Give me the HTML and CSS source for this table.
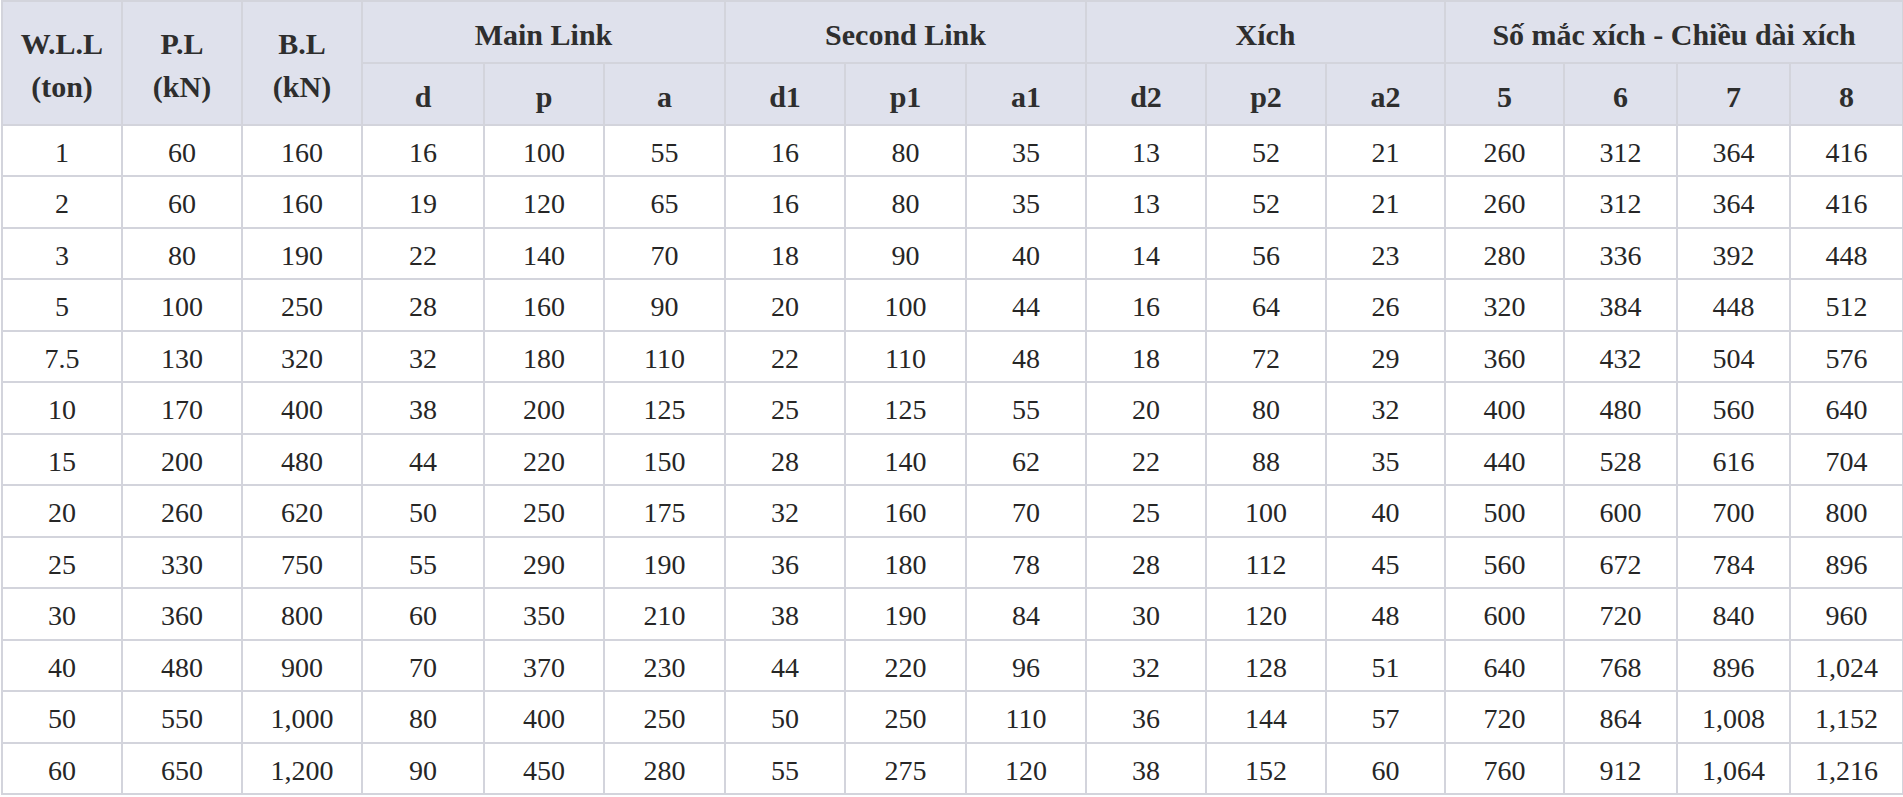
FILE: index.html
```html
<!DOCTYPE html>
<html lang="vi">
<head>
<meta charset="utf-8">
<title>Bảng thông số</title>
<link rel="stylesheet" href="styles.css">
</head>
<body>
<table class="spec">
  <colgroup>
    <col class="c120"><col class="c120"><col class="c120">
    <col class="c122"><col class="c120"><col class="c121">
    <col class="c120"><col class="c121"><col class="c120">
    <col class="c120"><col class="c120"><col class="c119">
    <col class="c119"><col class="c113"><col class="c113"><col class="c113">
  </colgroup>
  <thead>
    <tr class="h1">
      <th rowspan="2">W.L.L<br>(ton)</th>
      <th rowspan="2">P.L<br>(kN)</th>
      <th rowspan="2">B.L<br>(kN)</th>
      <th colspan="3">Main Link</th>
      <th colspan="3">Second Link</th>
      <th colspan="3">Xích</th>
      <th colspan="4">Số mắc xích - Chiều dài xích</th>
    </tr>
    <tr class="h2">
      <th>d</th><th>p</th><th>a</th>
      <th>d1</th><th>p1</th><th>a1</th>
      <th>d2</th><th>p2</th><th>a2</th>
      <th>5</th><th>6</th><th>7</th><th>8</th>
    </tr>
  </thead>
  <tbody>
    <tr><td>1</td><td>60</td><td>160</td><td>16</td><td>100</td><td>55</td><td>16</td><td>80</td><td>35</td><td>13</td><td>52</td><td>21</td><td>260</td><td>312</td><td>364</td><td>416</td></tr>
    <tr class="odd"><td>2</td><td>60</td><td>160</td><td>19</td><td>120</td><td>65</td><td>16</td><td>80</td><td>35</td><td>13</td><td>52</td><td>21</td><td>260</td><td>312</td><td>364</td><td>416</td></tr>
    <tr><td>3</td><td>80</td><td>190</td><td>22</td><td>140</td><td>70</td><td>18</td><td>90</td><td>40</td><td>14</td><td>56</td><td>23</td><td>280</td><td>336</td><td>392</td><td>448</td></tr>
    <tr class="odd"><td>5</td><td>100</td><td>250</td><td>28</td><td>160</td><td>90</td><td>20</td><td>100</td><td>44</td><td>16</td><td>64</td><td>26</td><td>320</td><td>384</td><td>448</td><td>512</td></tr>
    <tr><td>7.5</td><td>130</td><td>320</td><td>32</td><td>180</td><td>110</td><td>22</td><td>110</td><td>48</td><td>18</td><td>72</td><td>29</td><td>360</td><td>432</td><td>504</td><td>576</td></tr>
    <tr class="odd"><td>10</td><td>170</td><td>400</td><td>38</td><td>200</td><td>125</td><td>25</td><td>125</td><td>55</td><td>20</td><td>80</td><td>32</td><td>400</td><td>480</td><td>560</td><td>640</td></tr>
    <tr><td>15</td><td>200</td><td>480</td><td>44</td><td>220</td><td>150</td><td>28</td><td>140</td><td>62</td><td>22</td><td>88</td><td>35</td><td>440</td><td>528</td><td>616</td><td>704</td></tr>
    <tr class="odd"><td>20</td><td>260</td><td>620</td><td>50</td><td>250</td><td>175</td><td>32</td><td>160</td><td>70</td><td>25</td><td>100</td><td>40</td><td>500</td><td>600</td><td>700</td><td>800</td></tr>
    <tr><td>25</td><td>330</td><td>750</td><td>55</td><td>290</td><td>190</td><td>36</td><td>180</td><td>78</td><td>28</td><td>112</td><td>45</td><td>560</td><td>672</td><td>784</td><td>896</td></tr>
    <tr class="odd"><td>30</td><td>360</td><td>800</td><td>60</td><td>350</td><td>210</td><td>38</td><td>190</td><td>84</td><td>30</td><td>120</td><td>48</td><td>600</td><td>720</td><td>840</td><td>960</td></tr>
    <tr><td>40</td><td>480</td><td>900</td><td>70</td><td>370</td><td>230</td><td>44</td><td>220</td><td>96</td><td>32</td><td>128</td><td>51</td><td>640</td><td>768</td><td>896</td><td>1,024</td></tr>
    <tr class="odd"><td>50</td><td>550</td><td>1,000</td><td>80</td><td>400</td><td>250</td><td>50</td><td>250</td><td>110</td><td>36</td><td>144</td><td>57</td><td>720</td><td>864</td><td>1,008</td><td>1,152</td></tr>
    <tr><td>60</td><td>650</td><td>1,200</td><td>90</td><td>450</td><td>280</td><td>55</td><td>275</td><td>120</td><td>38</td><td>152</td><td>60</td><td>760</td><td>912</td><td>1,064</td><td>1,216</td></tr>
  </tbody>
</table>
</body>
</html>
```
FILE: styles.css
```css
html, body {
  margin: 0;
  padding: 0;
  background: #ffffff;
}
body {
  font-family: "Liberation Serif", "Times New Roman", serif;
  color: #262626;
}
.spec {
  border-collapse: collapse;
  table-layout: fixed;
  width: 1903px;
  margin: 0 0 0 1px;
}
.c113 { width: 113px; }
.c119 { width: 119px; }
.c120 { width: 120px; }
.c121 { width: 121px; }
.c122 { width: 122px; }
.spec th,
.spec td {
  border: 2px solid #d3d4dc;
  text-align: center;
  vertical-align: middle;
  padding: 0;
}
.spec th {
  background: #dfe1ec;
  font-weight: bold;
  font-size: 30px;
  line-height: 43px;
  color: #2e2e2e;
}
.spec .h1 th {
  height: 56px;
  padding-top: 4px;
}
.spec .h2 th {
  height: 56px;
  padding-top: 4px;
}
.spec .h1 th[rowspan] {
  padding-top: 4px;
}
.spec td {
  font-size: 28px;
  height: 45px;
  line-height: 30px;
  padding-top: 4px;
}
.spec tr.odd td {
  height: 46px;
}
```
